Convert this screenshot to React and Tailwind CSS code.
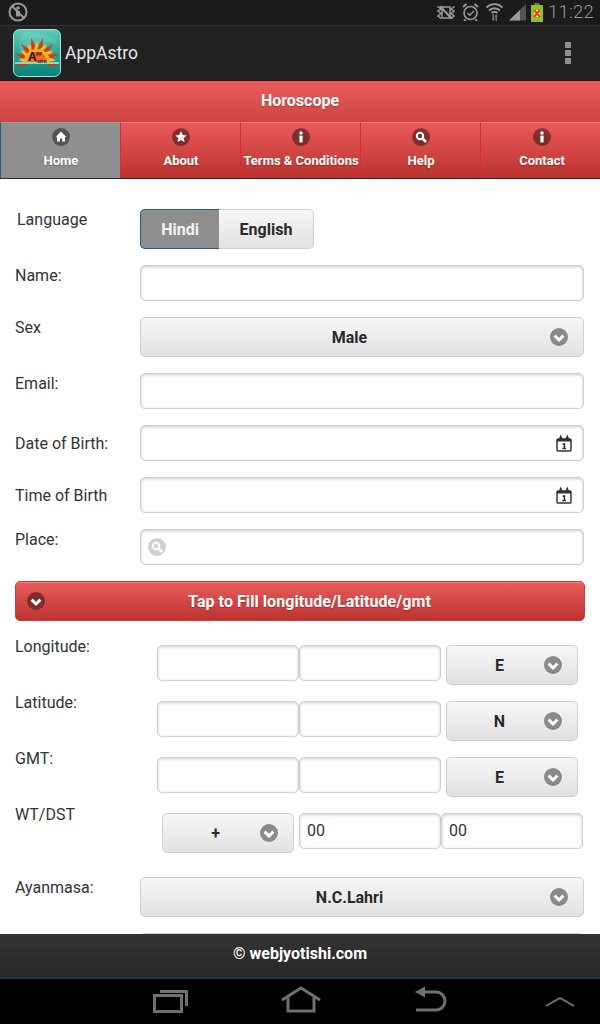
import React from "react";

const Chevron = ({ dark }) => (
  <svg width="18" height="18" viewBox="0 0 18 18" className="shrink-0 block">
    <circle cx="9" cy="9" r="9" fill={dark ? "#7f2b2b" : "#8a8a8a"} />
    <path d="M4.6 7.6 9 12 13.4 7.6" fill="none" stroke="#fff" strokeWidth="3" strokeLinejoin="miter" />
  </svg>
);

const Circle = ({ children }) => (
  <svg width="18" height="18" viewBox="0 0 18 18" className="block">
    <circle cx="9" cy="9" r="9" fill="#000" fillOpacity="0.42" />
    {children}
  </svg>
);

const HomeGlyph = () => <path d="M9 3.6 14.4 9H13v4.6h-2.9v-3H7.9v3H5V9H3.6z" fill="#fff" />;
const StarGlyph = () => <path d="M9 3.2l1.7 3.7 4 .5-3 2.7.9 4L9 12.1l-3.6 2 .9-4-3-2.7 4-.5z" fill="#fff" />;
const InfoGlyph = () => (
  <>
    <circle cx="9" cy="5" r="1.7" fill="#fff" />
    <rect x="7.4" y="7.6" width="3.2" height="6.8" fill="#fff" />
  </>
);
const SearchGlyph = () => (
  <>
    <circle cx="8" cy="8" r="3.2" fill="none" stroke="#fff" strokeWidth="2" />
    <path d="M10.4 10.4 14 14" stroke="#fff" strokeWidth="2.6" />
  </>
);

const CalendarIcon = () => (
  <svg width="16" height="18" viewBox="0 0 16 18" className="block shrink-0">
    <rect x="1" y="5" width="14" height="12" rx="1" fill="#fff" stroke="#333" strokeWidth="1.5" />
    <rect x="1" y="5" width="14" height="2.500" fill="#333" />
    <path d="M2.500 6 4.700 0.500 7 6zM9 6 11.300 0.500 13.500 6z" fill="#333" />
    <path d="M6.600 10.400 8.400 9.800V14.400M6.400 14.600H10" fill="none" stroke="#333" strokeWidth="1.500" />
  </svg>
);

const NavItem = ({ label, glyph, active, shift }) => (
  <div
    className={
      (active
        ? "w-[120px] h-full flex flex-col items-center bg-[#8f8f8f] border-l border-l-[#1f5f85] border-t border-t-[#a0a0a0] pt-[5px] "
        : "w-[120px] h-full flex flex-col items-center border-l border-l-[#dc2a34] border-t border-t-[#ef8080] pt-[5px] bg-gradient-to-b from-[#ea5b5b] to-[#ba312c] ") +
      (shift || "")
    }
  >
    <Circle>{glyph}</Circle>
    <span className="mt-[7px] text-[13px] leading-[16px] font-bold text-white whitespace-nowrap [text-shadow:0_1px_1px_rgba(0,0,0,0.3)]">
      {label}
    </span>
  </div>
);

const Label = ({ children, className }) => (
  <div className={"w-[125px] shrink-0 text-[16px] leading-[20px] text-[#333] " + (className || "pt-[1px]")}>
    {children}
  </div>
);

const Field = ({ className, value, children, before }) => (
  <div
    className={
      "h-[36px] flex items-center bg-white border border-[#cfcfcf] rounded-[5px] shadow-[inset_0_1px_3px_rgba(0,0,0,0.2)] " +
      (className || "")
    }
  >
    {before}
    <input
      readOnly
      value={value || ""}
      className="min-w-0 flex-1 h-full bg-transparent px-[7px] pb-[2px] text-[16px] text-[#333] outline-none"
    />
    {children}
  </div>
);

const Select = ({ className, label, pad }) => (
  <div
    className={
      "h-[40px] flex items-center bg-gradient-to-b from-[#f7f7f7] to-[#e2e2e2] border border-[#cfcfcf] rounded-[5px] " +
      (className || "")
    }
  >
    <span className={"flex-1 text-center text-[16px] font-bold text-[#2a2a2a] pt-[2px] " + (pad || "")}>{label}</span>
    <span className="pr-[15px]">
      <Chevron />
    </span>
  </div>
);

const CoordRow = ({ label, dir }) => (
  <div className="flex items-start mb-[16px]">
    <Label className="-mt-[8px]">{label}</Label>
    <div className="flex items-start pl-[17px]">
      <Field className="w-[142px]" />
      <Field className="w-[142px]" />
      <Select className="w-[132px] ml-[5px]" label={dir} pad="pl-[8px]" />
    </div>
  </div>
);

const Logo = () => {
  const rays = [];
  for (let i = 0; i < 15; i++) {
    const a = (-195 + i * 15) * (Math.PI / 180);
    const cx = 24;
    const cy = 31;
    const r1 = 11;
    const r2 = i % 2 ? 19 : 23;
    const n = a + Math.PI / 2;
    rays.push(
      <polygon
        key={i}
        points={`${cx + r1 * Math.cos(a) + 2.8 * Math.cos(n)},${cy + r1 * Math.sin(a) + 2.8 * Math.sin(n)} ${cx + r1 * Math.cos(a) - 2.8 * Math.cos(n)},${cy + r1 * Math.sin(a) - 2.8 * Math.sin(n)} ${cx + r2 * Math.cos(a)},${cy + r2 * Math.sin(a)}`}
        fill={i % 2 ? "#f5c518" : "#e0321c"}
      />
    );
  }
  return (
    <svg width="48" height="48" viewBox="0 0 48 48" className="block shrink-0">
      <defs>
        <linearGradient id="lg" x1="0" y1="0" x2="0" y2="1">
          <stop offset="0" stopColor="#5ccdb9" />
          <stop offset="0.65" stopColor="#1d9d8c" />
          <stop offset="1" stopColor="#0e7f76" />
        </linearGradient>
      </defs>
      <rect x="0.5" y="0.5" width="47" height="47" rx="6" fill="url(#lg)" stroke="#9fe8df" />
      <path d="M12 3C20 3 36 3 44 14 30 10 22 18 8 24 4 18 6 8 12 3z" fill="#fff" fillOpacity="0.12" />
      {rays}
      <path d="M11 33a13 13 0 0 1 26 0z" fill="#f7b01e" />
      <path d="M14 33a10 10 0 0 1 20 0z" fill="#f36b1c" />
      <rect x="2" y="33" width="44" height="2" fill="#8fd4c5" />
      <text x="15" y="32" fontFamily="Liberation Sans, sans-serif" fontSize="12" fontWeight="700" fill="#111">A</text>
      <text x="23" y="26" fontFamily="Liberation Sans, sans-serif" fontSize="5" fontWeight="700" fill="#111">pp</text>
      <text x="24" y="34" fontFamily="Liberation Sans, sans-serif" fontSize="5" fontWeight="700" fill="#111">stro</text>
    </svg>
  );
};

const StatusIcons = () => (
  <div className="flex items-center ml-auto pr-[6px] -mt-[1px]">
    <svg width="18" height="13" viewBox="0 0 18 13" className="mr-[7px] block">
      <path d="M0.500 0.500 4 3 1 5 4 7.500 1 10l3 2.500" fill="none" stroke="#9a9a9a" strokeWidth="1.500" />
      <path d="M17.500 0.500 14 3l3 2-3 2.500 3 2.500-3 2.500" fill="none" stroke="#9a9a9a" strokeWidth="1.500" />
      <path d="M5 1h8v11H5z" fill="none" stroke="#9a9a9a" strokeWidth="1.500" />
      <path d="M3 0 15 13" stroke="#9a9a9a" strokeWidth="2" />
    </svg>
    <svg width="17" height="18" viewBox="0 0 17 18" className="mr-[7px] block">
      <circle cx="8.500" cy="10" r="6.500" fill="none" stroke="#9a9a9a" strokeWidth="1.600" />
      <path d="M5.500 10l2.200 2.200L12 8" fill="none" stroke="#9a9a9a" strokeWidth="1.400" />
      <path d="M1 4 4.500 1M16 4 12.500 1M3.500 16.500l-1.500 1.500M13.500 16.500l1.500 1.500" stroke="#9a9a9a" strokeWidth="2" />
    </svg>
    <svg width="17" height="18" viewBox="0 0 17 18" className="mr-[6px] block">
      <path d="M0.500 4.500c4.500-4.500 11.500-4.500 16 0M3 7.500c3-3 8-3 11 0M5.500 10c1.800-1.500 4.200-1.500 6 0" fill="none" stroke="#9a9a9a" strokeWidth="1.900" />
      <path d="M6.500 11h1.400v4.500H9L7.200 18 5.400 15.500h1.100zM10.200 11l1.800 2.500h-1.100V18H9.500v-4.500H8.400z" fill="#7d7d7d" />
    </svg>
    <svg width="17" height="17" viewBox="0 0 17 17" className="mr-[5px] block">
      <path d="M0 16.500 17 0v16.500z" fill="#555" />
      <path d="M0 16.500 11 6v10.500z" fill="#9a9a9a" />
    </svg>
    <svg width="12" height="19" viewBox="0 0 12 19" className="mr-[5px] block">
      <rect x="3.500" y="0" width="5" height="2" fill="#6f6f6f" />
      <rect x="0" y="2" width="12" height="17" fill="#8fc31f" />
      <rect x="3" y="7" width="6" height="7" fill="#fff" fillOpacity="0.75" />
      <path d="M3 7 9 14M9 7 3 14" stroke="#e2401c" strokeWidth="2" />
    </svg>
    <span className="text-[18.5px] leading-[25px] tracking-[0.2px] font-light text-[#9a9a9a]">11:22</span>
  </div>
);

export default function App() {
  return (
    <div className="w-[600px] h-[1024px] flex flex-col overflow-hidden bg-white font-['Roboto',sans-serif]">
      <div className="h-[26px] shrink-0 flex items-center bg-[#1b1b1b] border-b border-b-[#333] pl-[8px]">
        <svg width="20" height="20" viewBox="0 0 20 20" className="block -mt-[1px]">
          <circle cx="10" cy="10" r="8.500" fill="none" stroke="#9a9a9a" strokeWidth="2" />
          <circle cx="10" cy="6" r="1.800" fill="#9a9a9a" />
          <path d="M8 9h4v5.500H8z" fill="#9a9a9a" />
          <path d="M4 4l12 12" stroke="#9a9a9a" strokeWidth="2" />
        </svg>
        <StatusIcons />
      </div>

      <div className="h-[54px] shrink-0 flex items-center bg-[#222] pl-[13px] pr-[29px]">
        <Logo />
        <span className="ml-[4px] pt-[1px] text-[17.5px] text-[#e6e6e6]">AppAstro</span>
        <div className="ml-auto flex flex-col gap-[2px]">
          <div className="w-[6px] h-[6px] bg-[#8f8f8f]" />
          <div className="w-[6px] h-[6px] bg-[#8f8f8f]" />
          <div className="w-[6px] h-[6px] bg-[#8f8f8f]" />
        </div>
      </div>

      <div className="h-[42px] shrink-0 flex items-center justify-center pb-[1px] border-t border-t-[#2a1414] bg-gradient-to-b from-[#e95d5c] to-[#ce4442] text-[16px] font-bold text-white [text-shadow:0_1px_1px_rgba(0,0,0,0.25)]">
        Horoscope
      </div>

      <div className="h-[57px] shrink-0 flex border-b border-b-[#2a2a2a]">
        <NavItem active label="Home" glyph={<HomeGlyph />} shift="pl-[1px]" />
        <NavItem label="About" glyph={<StarGlyph />} shift="pl-[1px]" />
        <NavItem label="Terms & Conditions" glyph={<InfoGlyph />} shift="pl-[1px]" />
        <NavItem label="Help" glyph={<SearchGlyph />} shift="pl-[1px]" />
        <NavItem label="Contact" glyph={<InfoGlyph />} shift="pl-[3px]" />
      </div>

      <div className="flex-1 min-h-0 overflow-hidden px-[15px] pt-[30px]">
        <div className="flex items-start mb-[16px]">
          <Label className="pl-[2px] pt-[1px]">Language</Label>
          <div className="flex h-[40px] w-[174px] text-[16px] font-bold">
            <div className="w-[79px] pt-[2px] flex items-center justify-center bg-[#8f8f8f] border border-[#1f5f85] border-r-0 rounded-l-[5px] text-[#f3f3f3]">
              Hindi
            </div>
            <div className="flex-1 pt-[2px] flex items-center justify-center bg-gradient-to-b from-[#f7f7f7] to-[#e2e2e2] border border-[#cfcfcf] border-l-0 rounded-r-[5px] text-[#2a2a2a]">
              English
            </div>
          </div>
        </div>

        <div className="flex items-start mb-[16px]">
          <Label>Name:</Label>
          <Field className="w-[444px]" />
        </div>
        <div className="flex items-start mb-[16px]">
          <Label>Sex</Label>
          <Select className="w-[444px]" label="Male" pad="pl-[8px]" />
        </div>
        <div className="flex items-start mb-[16px]">
          <Label>Email:</Label>
          <Field className="w-[444px]" />
        </div>
        <div className="flex items-center mb-[16px]">
          <Label className="pt-[2px]">Date of Birth:</Label>
          <Field className="w-[444px] pr-[11px]">
            <CalendarIcon />
          </Field>
        </div>
        <div className="flex items-center mb-[16px]">
          <Label className="pt-[2px]">Time of Birth</Label>
          <Field className="w-[444px] pr-[11px]">
            <CalendarIcon />
          </Field>
        </div>
        <div className="flex items-start mb-[16px]">
          <Label>Place:</Label>
          <Field
            className="w-[444px] pl-[7px]"
            before={
              <svg width="18" height="18" viewBox="0 0 18 18" className="block shrink-0">
                <circle cx="9" cy="9" r="9" fill="#d0d0d0" />
                <circle cx="8" cy="8" r="3.200" fill="none" stroke="#fff" strokeWidth="2" />
                <path d="M10.400 10.400 14 14" stroke="#fff" strokeWidth="2.600" />
              </svg>
            }
          />
        </div>

        <div className="h-[40px] w-[570px] mb-[24px] flex items-center pl-[11px] pr-[10px] rounded-[5px] border border-[#c93a3a] bg-gradient-to-b from-[#ea5c5c] to-[#bc322e] shadow-[inset_0_1px_0_rgba(255,255,255,0.25)]">
          <Chevron dark />
          <span className="flex-1 pt-[2px] text-center text-[16px] tracking-[0.06px] font-bold text-white [text-shadow:0_1px_1px_rgba(0,0,0,0.25)]">
            Tap to Fill longitude/Latitude/gmt
          </span>
        </div>

        <CoordRow label="Longitude:" dir="E" />
        <CoordRow label="Latitude:" dir="N" />
        <CoordRow label="GMT:" dir="E" />

        <div className="flex items-start mb-[24px]">
          <Label className="-mt-[8px]">WT/DST</Label>
          <div className="flex items-start pl-[22px]">
            <Select className="w-[132px]" label="+" pad="pl-[8px]" />
            <Field className="w-[142px] ml-[5px]" value="00" />
            <Field className="w-[142px]" value="00" />
          </div>
        </div>

        <div className="flex items-start mb-[16px]">
          <Label>Ayanmasa:</Label>
          <Select className="w-[444px]" label="N.C.Lahri" pad="pl-[8px]" />
        </div>
        <Field className="w-[444px] ml-[125px]" />
      </div>

      <div className="h-[45px] shrink-0 flex items-center justify-center pb-[3px] bg-gradient-to-b from-[#333] to-[#272727] border-b-2 border-b-[#0f3a4f] text-[16px] font-bold text-white">
        © webjyotishi.com
      </div>

      <div className="h-[45px] shrink-0 flex items-start bg-black">
        <svg width="600" height="45" viewBox="0 0 600 45" className="block">
          <g fill="none" stroke="#6f6f6f" strokeWidth="3">
            <rect x="154.500" y="16.500" width="27" height="16" />
            <path d="M160 12.500H186.500V27" />
            <path d="M282 21 301 9 320 21M288 18V32H314V18" />
            <path d="M422 13H436a8 8 0 0 1 0 18H416" />
            <path d="M546 27 560 19 574 27" strokeWidth="2" />
          </g>
          <path d="M415 13 425 7.500V18.500z" fill="#6f6f6f" />
        </svg>
      </div>
    </div>
  );
}
